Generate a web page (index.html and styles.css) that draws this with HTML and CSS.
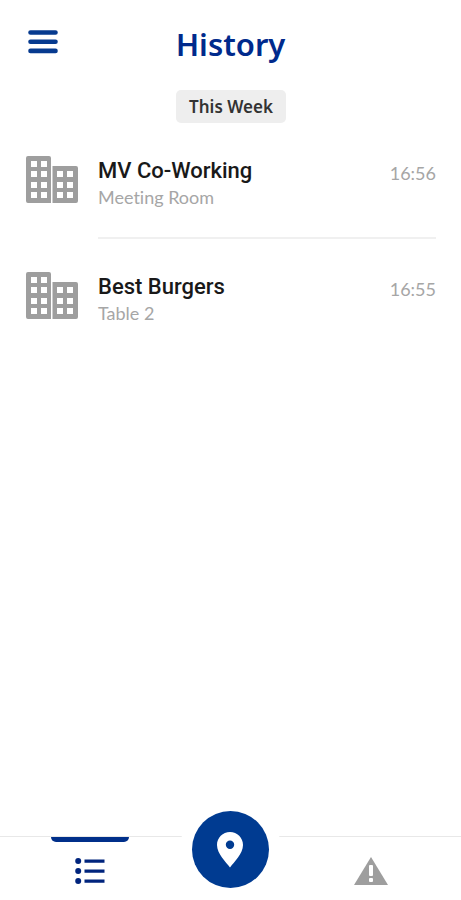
FILE: index.html
```html
<!DOCTYPE html>
<html lang="en">
<head>
<meta charset="utf-8">
<meta name="viewport" content="width=device-width, initial-scale=1">
<title>History</title>
<link rel="stylesheet" href="styles.css">
</head>
<body>
<header class="header">
  <button class="menu-button" type="button" aria-label="Menu">
    <svg width="30" height="24" viewBox="0 0 30 24"><path d="M2.5 2.5h25M2.5 11.7h25M2.5 20.9h25" stroke="currentColor" stroke-width="4.6" stroke-linecap="round"/></svg>
  </button>
  <h1 class="title">History</h1>
</header>
<main class="content">
  <h2 class="period">This Week</h2>
  <ul class="visits">
    <li class="visit">
      <svg class="building" width="52" height="48" viewBox="0 0 52 48" aria-hidden="true"><path fill="currentColor" fill-rule="evenodd" d="M2 0H23Q25 0 25 2V47H2Q0 47 0 45V2Q0 0 2 0ZM5 5v6h6V5zM15 5v6h6V5zM5 15v6h6v-6zM15 15v6h6v-6zM5 26v6h6v-6zM15 26v6h6v-6zM5 36v6h6v-6zM15 36v6h6v-6zM26.500 10H50Q52 10 52 12V45Q52 47 50 47H26.500ZM31 15v6h6v-6zM41 15v6h6v-6zM31 26v6h6v-6zM41 26v6h6v-6zM31 36v6h6v-6zM41 36v6h6v-6z"/></svg>
      <div class="details">
        <div class="place"><h3 class="name">MV Co-Working</h3><p class="area">Meeting Room</p></div>
        <time class="time" datetime="16:56">16:56</time>
      </div>
    </li>
    <li class="visit">
      <svg class="building" width="52" height="48" viewBox="0 0 52 48" aria-hidden="true"><path fill="currentColor" fill-rule="evenodd" d="M2 0H23Q25 0 25 2V47H2Q0 47 0 45V2Q0 0 2 0ZM5 5v6h6V5zM15 5v6h6V5zM5 15v6h6v-6zM15 15v6h6v-6zM5 26v6h6v-6zM15 26v6h6v-6zM5 36v6h6v-6zM15 36v6h6v-6zM26.500 10H50Q52 10 52 12V45Q52 47 50 47H26.500ZM31 15v6h6v-6zM41 15v6h6v-6zM31 26v6h6v-6zM41 26v6h6v-6zM31 36v6h6v-6zM41 36v6h6v-6z"/></svg>
      <div class="details">
        <div class="place"><h3 class="name">Best Burgers</h3><p class="area">Table 2</p></div>
        <time class="time" datetime="16:55">16:55</time>
      </div>
    </li>
  </ul>
</main>
<nav class="tabs" aria-label="Main">
  <a class="tab tab-active" href="#history" aria-label="History" aria-current="page">
    <svg width="30" height="28" viewBox="0 0 30 28"><g fill="currentColor"><circle cx="3.200" cy="4" r="3"/><circle cx="3.200" cy="14" r="3"/><circle cx="3.200" cy="24" r="3"/><path d="M9.500 2.400h20v3.400h-20zM9.500 12.400h20v3.400h-20zM9.500 22.400h20v3.400h-20z"/></g></svg>
  </a>
  <a class="tab" href="#places" aria-label="Check in">
    <span class="pin">
      <svg width="26" height="36" viewBox="0 0 26 36"><path fill="currentColor" fill-rule="evenodd" d="M13 0C5.800 0 0 5.800 0 13C0 22 9 30 13 35.500C17 30 26 22 26 13C26 5.800 20.200 0 13 0ZM13 8.500a4.200 4.200 0 1 1 0 8.400a4.200 4.200 0 1 1 0-8.400Z"/></svg>
    </span>
  </a>
  <a class="tab tab-muted" href="#alerts" aria-label="Alerts">
    <svg width="34" height="28" viewBox="0 0 34 28"><path fill="currentColor" d="M17 0L34 28H0Z"/><rect fill="#fff" x="15" y="8" width="4" height="11" rx="1"/><rect fill="#fff" x="15" y="21" width="4" height="4" rx="1"/></svg>
  </a>
</nav>
</body>
</html>
```
FILE: styles.css
```css
* { box-sizing: border-box; }
body {
  margin: 0;
  min-height: 100vh;
  display: flex;
  flex-direction: column;
  background: #fff;
  color: #191919;
  font-family: Roboto, "Liberation Sans", sans-serif;
  font-variant-ligatures: none;
}
h1, h2, h3, p, ul { margin: 0; padding: 0; font-weight: inherit; }
svg { display: block; flex: none; }
.header {
  display: grid;
  grid-template-columns: 32px 1fr 32px;
  align-items: center;
  padding: 20px 28px 0;
}
.menu-button {
  padding: 0 0 4px;
  border: 0;
  background: none;
  color: #063a8f;
  cursor: pointer;
}
.title {
  color: #002a8c;
  font: 600 31px/48px "Noto Sans", sans-serif;
  text-align: center;
}
.content {
  flex: 1;
  display: flex;
  flex-direction: column;
  padding: 22px 25px 0 26px;
}
.period {
  align-self: center;
  padding: 0 13px;
  border-radius: 5px;
  background: #eee;
  color: #333;
  font: 600 17px/33px "Noto Sans", sans-serif;
}
.visits { list-style: none; padding-top: 33px; }
.visit { display: flex; gap: 20px; }
.details {
  flex: 1;
  display: flex;
  justify-content: space-between;
  padding-bottom: 28px;
}
.visit + .visit { padding-top: 33px; }
.visit:not(:last-child) .details { border-bottom: 2px solid #f0f0f0; }
.building { color: #9e9e9e; }
.name { font-size: 22px; font-weight: 500; line-height: 30px; }
.area, .time { color: #a6a6a6; font-family: Lato, sans-serif; font-size: 18px; }
.area { line-height: 23px; }
.time { line-height: 34px; }
.tabs {
  display: grid;
  grid-template-columns: repeat(3, 1fr);
  height: 64px;
  padding: 0 20px;
  background: linear-gradient(#e8e8e8, #e8e8e8) top / 100% 1px no-repeat;
}
.tab {
  position: relative;
  display: flex;
  justify-content: center;
  padding-top: 21px;
}
.tab-active { color: #00247d; }
.tab-active::before {
  content: "";
  position: absolute;
  top: 1px;
  width: 78px;
  height: 5px;
  border-radius: 0 0 6px 6px;
  background: #002f8a;
}
.tab-muted { color: #9e9e9e; }
.pin {
  position: absolute;
  top: -25px;
  display: grid;
  place-items: center;
  width: 77px;
  height: 77px;
  border-radius: 50%;
  background: #003b91;
  color: #fff;
  box-shadow: 0 0 0 12px #fff;
}
```
